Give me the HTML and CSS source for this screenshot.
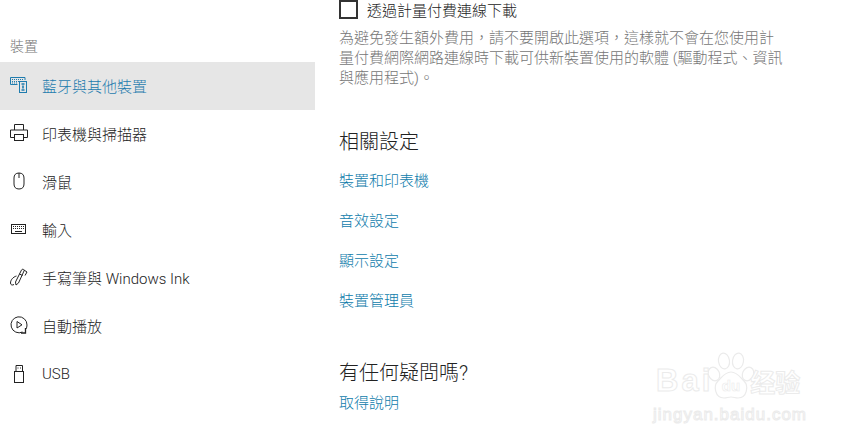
FILE: index.html
```html
<!DOCTYPE html>
<html lang="zh-Hant">
<head>
    <meta charset="UTF-8">
    <title>裝置</title>
    <link rel="stylesheet" href="styles.css">
</head>
<body>
    <nav class="sidebar">
        <div class="side-title">裝置</div>
        <a class="side-item active">
            <svg class="side-icon" viewBox="0 0 18 18" fill="none" stroke="currentColor">
                <path d="M.5 8.500V1.500h14.500v2.500M.5 8.500h7"/>
                <path d="M2 3.500h11M2 5.500h7M2 7h5" stroke-dasharray="1 1"/>
                <rect x="9.500" y="5.500" width="7" height="11"/>
                <path d="M11.500 8h3M11.500 14h3M13 9.500v3" stroke-width="1.600"/>
            </svg>
            <span>藍牙與其他裝置</span>
        </a>
        <a class="side-item">
            <svg class="side-icon" viewBox="0 0 18 18" fill="none" stroke="currentColor">
                <path d="M4.500 6V.5h9V6M4.500 13.500h-4V6h17v7.500h-4"/>
                <rect x="4.500" y="10.500" width="9" height="6"/>
            </svg>
            <span>印表機與掃描器</span>
        </a>
        <a class="side-item">
            <svg class="side-icon" viewBox="0 0 18 18" fill="none" stroke="currentColor">
                <path d="M4 6C4 3 5.500 1 9 1s5 2 5 5v6c0 3-1.500 5-5 5s-5-2-5-5z"/>
                <path d="M9 1v5"/>
            </svg>
            <span>滑鼠</span>
        </a>
        <a class="side-item">
            <svg class="side-icon" viewBox="0 0 18 18" fill="none" stroke="currentColor">
                <rect x="1.500" y="4.500" width="14" height="9"/>
                <path d="M3 6.500h11M3 8.500h11" stroke-dasharray="1 1"/>
                <path d="M5 11.500h7"/>
            </svg>
            <span>輸入</span>
        </a>
        <a class="side-item">
            <svg class="side-icon" viewBox="0 0 18 18" fill="none" stroke="currentColor">
                <path d="M5.500 14l6-12c.8-1.500 3.200-.6 2.500 1L8.500 15 6 17z"/>
                <path d="M9.500 6l3 1.500M14 2l3 2-2 3.500"/>
                <path d="M6.500 8C3 9 .5 12 .5 15c0 2 2 2.500 3.500 1.500" />
            </svg>
            <span>手寫筆與 Windows Ink</span>
        </a>
        <a class="side-item">
            <svg class="side-icon" viewBox="0 0 18 18" fill="none" stroke="currentColor">
                <path d="M12.500 16A8 8 0 1 1 17 9c0 1.500-.3 2.800-1 4"/>
                <path d="M7 5.500v6.500l5-3.200z"/>
                <path d="M15.500 12v5h-4.500" stroke-width="1.300"/>
            </svg>
            <span>自動播放</span>
        </a>
        <a class="side-item side-item-usb">
            <svg class="side-icon" viewBox="0 0 18 18" fill="none" stroke="currentColor">
                <path d="M6 6.500V.5h6.500v6"/>
                <rect x="4.500" y="6.500" width="9" height="11"/>
                <path d="M7.500 3h1M10 3h1"/>
            </svg>
            <span>USB</span>
        </a>
    </nav>

    <main class="content">
        <label class="check-row">
            <span class="check-box"></span>
            <span>透過計量付費連線下載</span>
        </label>
        <p class="desc">為避免發生額外費用&#xFF0C;請不要開啟此選項&#xFF0C;這樣就不會在您使用計量付費網際網路連線時下載可供新裝置使用的軟體 (驅動程式、資訊與應用程式)。</p>

        <h2 class="related-title">相關設定</h2>
        <a class="link">裝置和印表機</a>
        <a class="link">音效設定</a>
        <a class="link">顯示設定</a>
        <a class="link">裝置管理員</a>

        <h2 class="help-title">有任何疑問嗎?</h2>
        <a class="link help-link">取得說明</a>
    </main>

    <!-- marca de agua -->
    <div class="watermark">
        <div class="wm-logo">
            <span class="wm-bai">Bai</span>
            <svg class="wm-paw" viewBox="0 0 48 48" fill="#fff" stroke="#ebebeb" stroke-width="1.200">
                <ellipse cx="7" cy="22" rx="5.500" ry="7" transform="rotate(-25 7 22)"/>
                <ellipse cx="17" cy="9" rx="5.500" ry="8" transform="rotate(-8 17 9)"/>
                <ellipse cx="31" cy="9" rx="5.500" ry="8" transform="rotate(8 31 9)"/>
                <ellipse cx="41" cy="22" rx="5.500" ry="7" transform="rotate(25 41 22)"/>
                <path d="M24 20c6 0 9 5 13 9 5 5 3 17-6 17-3 0-4-1-7-1s-4 1-7 1c-9 0-11-12-6-17 4-4 7-9 13-9z"/>
                <text x="24" y="39" text-anchor="middle" class="wm-du">du</text>
            </svg>
            <span class="wm-cjk">经验</span>
        </div>
        <div class="wm-url">jingyan.baidu.com</div>
    </div>
</body>
</html>
```

FILE: styles.css
```css
html, body {
    height: 100%;
}

body {
    margin: 0;
    width: 851px;
    height: 445px;
    overflow: hidden;
    display: flex;
    position: relative;
    background-color: #fff;
    color: #222;
    font-family: Roboto, "Noto Sans CJK TC", sans-serif;
    font-size: 15px;
    font-weight: 300;
}

.sidebar {
    width: 315px;
    padding-top: 36px;
    flex-shrink: 0;
}

.side-title {
    height: 26px;
    padding-left: 10px;
    line-height: 20px;
    font-size: 14px;
    color: #767676;
}

.side-item {
    display: flex;
    align-items: center;
    box-sizing: border-box;
    height: 48px;
    padding: 0 0 2px 10px;
    gap: 14px;
}

.side-item.active {
    background-color: #e6e6e6;
    color: #1f7cae;
}

.side-item-usb {
    padding-bottom: 0;
}

.side-icon {
    width: 18px;
    height: 18px;
    flex-shrink: 0;
}

.content {
    padding-left: 24px;
    width: 445px;
}

.check-row {
    display: flex;
    align-items: center;
    gap: 9px;
    height: 19px;
}

.check-box {
    width: 15px;
    height: 15px;
    border: 2px solid #333;
}

.desc {
    margin: 9px 0 0;
    width: 445px;
    line-height: 20px;
    color: #767676;
}

h2 {
    margin: 0;
    font-size: 20px;
    font-weight: 300;
    line-height: 28px;
}

.related-title {
    margin-top: 40px;
}

.link {
    display: block;
    height: 40px;
    line-height: 40px;
    color: #0f7cab;
}

.related-title + .link {
    margin-top: 5px;
}

.help-title {
    margin-top: 38px;
}

.help-link {
    height: 22px;
    line-height: 22px;
    margin-top: 5px;
}

.watermark {
    position: absolute;
    left: 656px;
    top: 352px;
    color: #fff;
    -webkit-text-stroke: 1px #ebebeb;
}

.wm-logo {
    display: flex;
    align-items: flex-end;
    font-family: "Liberation Sans", sans-serif;
    font-size: 30px;
    font-weight: 700;
    line-height: 34px;
}

.wm-bai {
    letter-spacing: 3px;
    font-size: 31px;
    line-height: 38px;
}

.wm-paw {
    width: 48px;
    height: 48px;
    margin: 0 -5px 0 -6px;
}

.wm-du {
    font-family: "Liberation Sans", sans-serif;
    font-size: 15px;
    stroke-width: 0.6;
}

.wm-cjk {
    font-family: "Noto Sans CJK SC", sans-serif;
    font-size: 25px;
    line-height: 38px;
}

.wm-url {
    font-family: "Liberation Sans", sans-serif;
    font-size: 17px;
    line-height: 20px;
    margin: 5px 0 0 -3px;
    letter-spacing: 1px;
    white-space: nowrap;
}
```
